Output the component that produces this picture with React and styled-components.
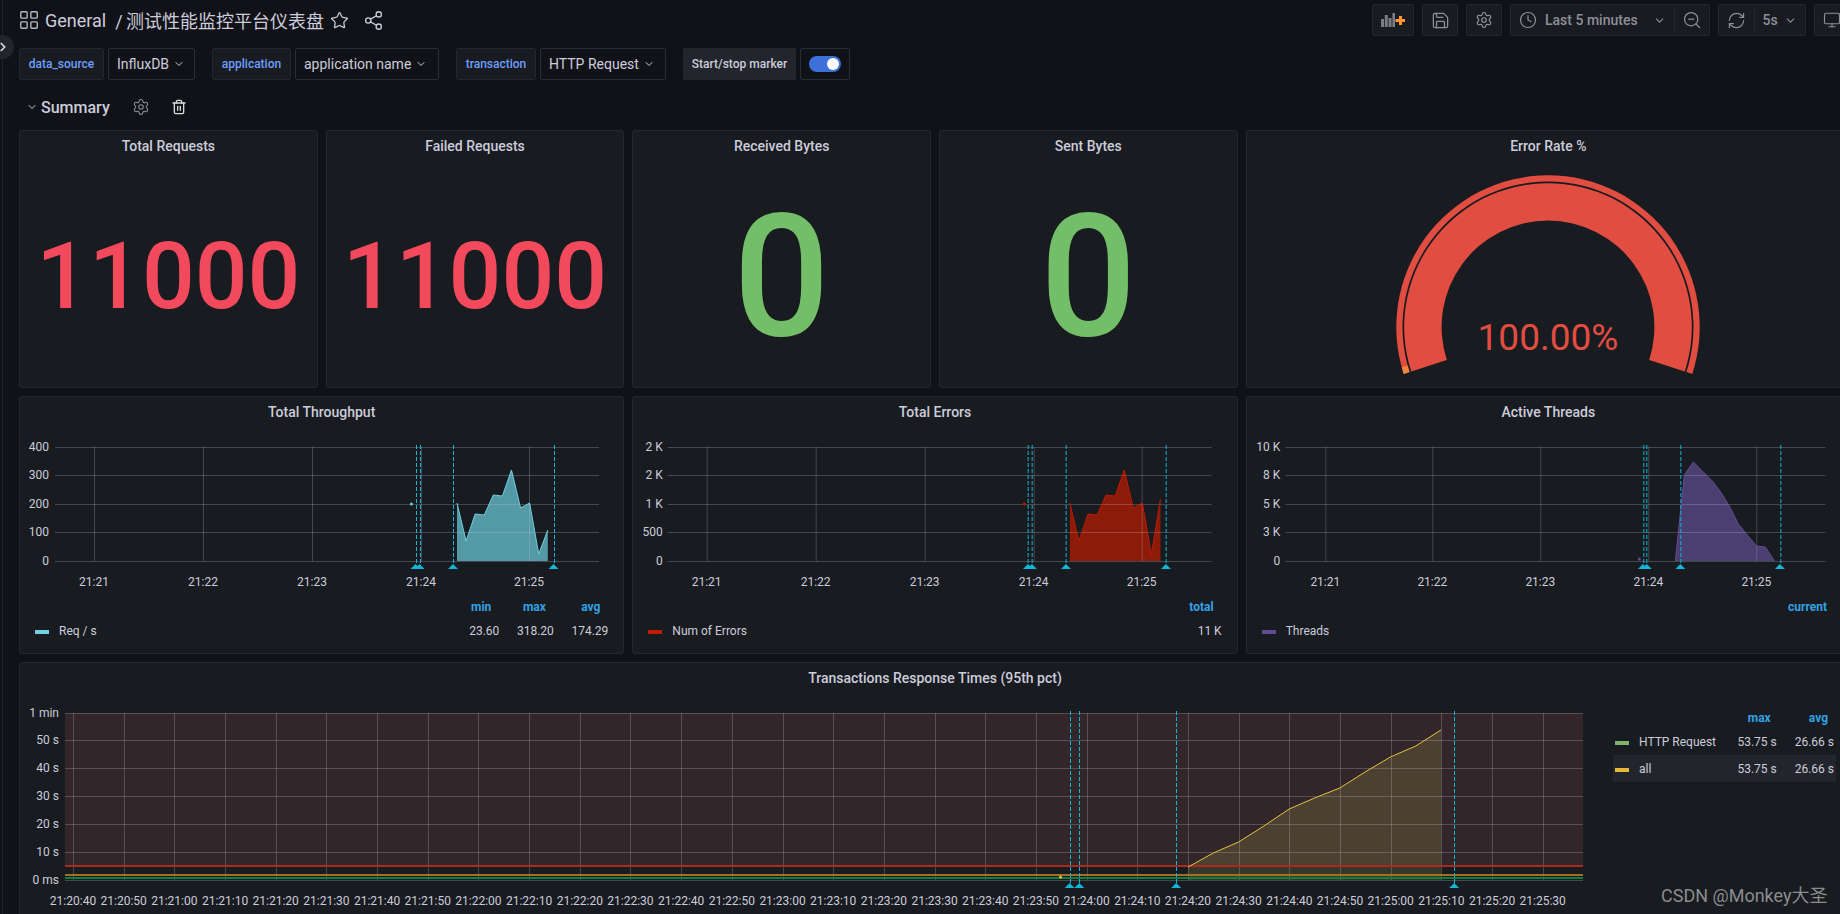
import styled, { createGlobalStyle } from "styled-components";
import {
  ChevronDown,
  ChevronRight,
  Clock,
  LayoutGrid,
  Monitor,
  RefreshCw,
  Save,
  Settings,
  Share2,
  Star,
  Trash2,
  ZoomOut,
} from "lucide-react";

const GlobalStyle = createGlobalStyle`
  html, body {
    margin: 0;
    background: #111217;
    overflow: hidden;
  }
  * {
    box-sizing: border-box;
  }
`;

const CYAN = "#12b5d8";

// coordinates below are page pixels, the svg viewBox maps them into each panel
const throughputY = [503, 541, 514, 515, 495, 496, 470, 508, 503, 554, 530];
const errorsY = [503, 541, 514, 515, 495, 496, 470, 508, 503, 554, 499];

const throughput = {
  view: [19, 428, 605, 168],
  left: 55,
  right: 599,
  labelRight: 49,
  yTicks: [
    [447, "400"],
    [475, "300"],
    [504, "200"],
    [532, "100"],
    [561, "0"],
  ],
  xTicks: [
    [94, "21:21"],
    [203, "21:22"],
    [312, "21:23"],
    [421, "21:24"],
    [529, "21:25"],
  ],
  marks: [415.5, 419.6, 453, 553.5],
  color: "#6ed0e0",
  points: throughputY.map((y, i) => [457 + i * 9.08, y]),
  dot: [411.4, 504],
};

const errors = {
  view: [632.33, 428, 605, 168],
  left: 668,
  right: 1212,
  labelRight: 663,
  yTicks: [
    [447, "2 K"],
    [475, "2 K"],
    [504, "1 K"],
    [532, "500"],
    [561, "0"],
  ],
  xTicks: [
    [707, "21:21"],
    [816, "21:22"],
    [925, "21:23"],
    [1034, "21:24"],
    [1142, "21:25"],
  ],
  marks: [1028.3, 1032.3, 1066.3, 1166.3],
  color: "#bf1b00",
  points: errorsY.map((y, i) => [1070.2 + i * 9.06, y]),
  dot: [1024.5, 504],
};

const threads = {
  view: [1245.67, 428, 605, 168],
  left: 1285,
  right: 1825,
  labelRight: 1280,
  yTicks: [
    [447, "10 K"],
    [475, "8 K"],
    [504, "5 K"],
    [532, "3 K"],
    [561, "0"],
  ],
  xTicks: [
    [1325, "21:21"],
    [1432, "21:22"],
    [1540, "21:23"],
    [1648, "21:24"],
    [1756, "21:25"],
  ],
  marks: [1642.6, 1646.4, 1680, 1779.6],
  color: "#614d93",
  points: [
    [1675, 561],
    [1684, 475],
    [1693, 462],
    [1702, 471],
    [1712, 481],
    [1721, 493],
    [1729, 506],
    [1738, 524],
    [1747, 535],
    [1756, 546],
    [1765, 547],
    [1774, 561],
  ],
  dot: [1639, 559],
};

const responseTimes = {
  view: [19, 694, 1594, 216],
  left: 65,
  right: 1583,
  labelRight: 59,
  labelY: 901,
  yTicks: [
    [713, "1 min"],
    [740, "50 s"],
    [768, "40 s"],
    [796, "30 s"],
    [824, "20 s"],
    [852, "10 s"],
    [880, "0 ms"],
  ],
  xTicks: Array.from({ length: 30 }, (_, i) => {
    const total = 21 * 3600 + 20 * 60 + 40 + i * 10;
    const h = Math.floor(total / 3600);
    const m = String(Math.floor((total % 3600) / 60)).padStart(2, "0");
    const s = String(total % 60).padStart(2, "0");
    return [73 + i * 50.68, `${h}:${m}:${s}`];
  }),
  marks: [1069.6, 1079.3, 1176.2, 1454.2],
  markTop: 711,
  color: "#e5c23e",
  fillColor: "#b5b04a",
  fillOpacity: 0.2,
  points: [867, 853, 842, 826, 809, 798, 788, 772, 757, 746, 730].map((y, i) => [
    1188 + i * 25.3,
    y,
  ]),
  dot: [1060.5, 877],
};

const crisp = (v) => Math.round(v) + 0.5;

function Chart({ config, children, band }) {
  const { view, left, right, labelRight, yTicks, xTicks, marks, color, points, dot } = config;
  const top = yTicks[0][0];
  const bottom = yTicks[yTicks.length - 1][0];
  const markTop = config.markTop ?? top - 2;
  const labelY = config.labelY ?? 582;
  const path = points.map(([x, y]) => `${x},${y}`).join(" ");
  const first = points[0][0];
  const last = points[points.length - 1][0];
  return (
    <ChartSvg viewBox={view.join(" ")} width={view[2]} height={view[3]}>
      {band}
      <polygon
        points={`${first},${bottom} ${path} ${last},${bottom}`}
        fill={config.fillColor ?? color}
        fillOpacity={config.fillOpacity ?? 0.7}
      />
      {yTicks.map(([y, label]) => (
        <g key={`${y}${label}`}>
          <line x1={left} x2={right} y1={crisp(y)} y2={crisp(y)} stroke="rgba(204,204,220,0.25)" />
          <AxisText x={labelRight} y={y} textAnchor="end" dominantBaseline="central">
            {label}
          </AxisText>
        </g>
      ))}
      {xTicks.map(([x, label]) => (
        <g key={label}>
          <line x1={crisp(x)} x2={crisp(x)} y1={top} y2={bottom} stroke="rgba(204,204,220,0.25)" />
          <AxisText x={x} y={labelY} textAnchor="middle" dominantBaseline="central">
            {label}
          </AxisText>
        </g>
      ))}
      {children}
      <polyline points={path} fill="none" stroke={color} strokeWidth="1" />
      <circle cx={dot[0]} cy={dot[1]} r="1.5" fill={color} />
      {marks.map((x) => (
        <g key={x}>
          <line
            x1={crisp(x)}
            x2={crisp(x)}
            y1={markTop}
            y2={bottom + 4}
            stroke={CYAN}
            strokeDasharray="4 2"
          />
          <polygon
            points={`${x},${bottom + 3} ${x - 5},${bottom + 8} ${x + 5},${bottom + 8}`}
            fill={CYAN}
          />
        </g>
      ))}
    </ChartSvg>
  );
}

// gauge angles go clockwise on screen, 162 is the lower left end, 378 the lower right
function arcPath(r0, r1, a0, a1) {
  const cx = 301;
  const cy = 165;
  const pt = (r, a) => {
    const rad = (a * Math.PI) / 180;
    return `${(cx + r * Math.cos(rad)).toFixed(2)} ${(cy + r * Math.sin(rad)).toFixed(2)}`;
  };
  const large = a1 - a0 > 180 ? 1 : 0;
  return `M${pt(r1, a0)} A${r1} ${r1} 0 ${large} 1 ${pt(r1, a1)} L${pt(r0, a1)} A${r0} ${r0} 0 ${large} 0 ${pt(r0, a0)} Z`;
}

function Gauge() {
  return (
    <GaugeSvg viewBox="0 0 604 226" width="604" height="226">
      <path d={arcPath(145.5, 151.7, 162, 378)} fill="#e24d42" />
      <path d={arcPath(145.5, 151.7, 162, 164.6)} fill="#ef843c" />
      <path d={arcPath(106.4, 143.8, 162, 378)} fill="#e24d42" />
      <GaugeValue x="301" y="175" textAnchor="middle" dominantBaseline="central">
        100.00%
      </GaugeValue>
    </GaugeSvg>
  );
}

function AddPanelIcon() {
  return (
    <svg width="24" height="14" viewBox="0 0 24 14">
      <g fill="#7b7c85">
        <rect x="0" y="6" width="3" height="8" />
        <rect x="3.8" y="2" width="3" height="12" />
        <rect x="7.6" y="5" width="3" height="9" />
        <rect x="11.4" y="0" width="2.6" height="14" />
      </g>
      <path d="M18 3h3v3h3v3h-3v3h-3V9h-3.500V6H18z" fill="#ff9830" />
    </svg>
  );
}

function Legend({ columns, colWidth, rows, side }) {
  return (
    <LegendBox $side={side}>
      <LegendHead $n={columns.length} $w={colWidth}>
        <span />
        {columns.map((c) => (
          <LegendCol key={c}>{c}</LegendCol>
        ))}
      </LegendHead>
      {rows.map((row) => (
        <LegendRow key={row.name} $n={columns.length} $w={colWidth} $active={row.active} $side={side}>
          <LegendName>
            <Swatch $color={row.color} />
            {row.name}
          </LegendName>
          {row.values.map((v, i) => (
            <LegendValue key={i}>{v}</LegendValue>
          ))}
        </LegendRow>
      ))}
    </LegendBox>
  );
}

function VarPicker({ label, value, labelWidth, valueWidth }) {
  return (
    <VarGroup>
      <VarLabel $w={labelWidth}>{label}</VarLabel>
      <VarValue $w={valueWidth}>
        {value}
        <ChevronDown size={12} strokeWidth={2} />
      </VarValue>
    </VarGroup>
  );
}

export default function App() {
  return (
    <Page>
      <GlobalStyle />
      <MenuToggle>
        <ChevronRight size={14} strokeWidth={3} />
      </MenuToggle>
      <Content>
        <Header>
          <TitleGroup>
            <LayoutGrid size={22} strokeWidth={1.5} color="#b7b8c4" />
            <Crumb>General</Crumb>
            <DashName>/ 测试性能监控平台仪表盘</DashName>
            <Star size={19} strokeWidth={1.6} color="#ccccdc" />
            <Share2 size={21} strokeWidth={1.5} color="#ccccdc" />
          </TitleGroup>
          <Toolbar>
            <ToolButton $w={42}>
              <AddPanelIcon />
            </ToolButton>
            <ToolButton>
              <Save size={19} strokeWidth={1.6} />
            </ToolButton>
            <ToolButton>
              <Settings size={18} strokeWidth={1.6} />
            </ToolButton>
            <ToolGroup>
              <ToolSegment $w={163} $pad="0 8px" $start>
                <Clock size={18} strokeWidth={1.6} />
                <ToolText $gap={8}>Last 5 minutes</ToolText>
                <ChevronDown size={13} strokeWidth={2} />
              </ToolSegment>
              <ToolSegment $w={35}>
                <ZoomOut size={20} strokeWidth={1.5} />
              </ToolSegment>
            </ToolGroup>
            <ToolGroup>
              <ToolSegment $w={34.5}>
                <RefreshCw size={19} strokeWidth={1.5} />
              </ToolSegment>
              <ToolSegment $w={51.5} $pad="0 8px" $start>
                <ToolText>5s</ToolText>
                <ChevronDown size={13} strokeWidth={2} />
              </ToolSegment>
            </ToolGroup>
            <ToolButton>
              <Monitor size={18} strokeWidth={1.6} />
            </ToolButton>
          </Toolbar>
        </Header>

        <VarRow>
          <VarPicker label="data_source" value="InfluxDB" labelWidth={85} valueWidth={87} />
          <VarPicker label="application" value="application name" labelWidth={79} valueWidth={144} />
          <VarPicker label="transaction" value="HTTP Request" labelWidth={80} valueWidth={126} />
          <VarGroup>
            <SwitchLabel>Start/stop marker</SwitchLabel>
            <SwitchBox>
              <SwitchTrack>
                <SwitchThumb />
              </SwitchTrack>
            </SwitchBox>
          </VarGroup>
        </VarRow>

        <RowHeader>
          <ChevronDown size={12} strokeWidth={2} color="#ccccdc" />
          <RowTitle>Summary</RowTitle>
          <Settings size={18} strokeWidth={1.4} color="#8e8e9a" />
          <Trash2 size={16} strokeWidth={2} color="#d8d9da" />
        </RowHeader>

        <PanelGrid>
          <Panel $span={4}>
            <PanelTitle>Total Requests</PanelTitle>
            <StatBody>
              <StatValue $color="#f2495c" $size={93}>
                11000
              </StatValue>
            </StatBody>
          </Panel>
          <Panel $span={4}>
            <PanelTitle>Failed Requests</PanelTitle>
            <StatBody>
              <StatValue $color="#f2495c" $size={93}>
                11000
              </StatValue>
            </StatBody>
          </Panel>
          <Panel $span={4}>
            <PanelTitle>Received Bytes</PanelTitle>
            <StatBody>
              <StatValue $color="#73bf69" $size={170}>
                0
              </StatValue>
            </StatBody>
          </Panel>
          <Panel $span={4}>
            <PanelTitle>Sent Bytes</PanelTitle>
            <StatBody>
              <StatValue $color="#73bf69" $size={170}>
                0
              </StatValue>
            </StatBody>
          </Panel>
          <Panel $span={8}>
            <PanelTitle>Error Rate %</PanelTitle>
            <Gauge />
          </Panel>

          <Panel $span={8}>
            <PanelTitle>Total Throughput</PanelTitle>
            <Chart config={throughput} />
            <Legend
              columns={["min", "max", "avg"]}
              colWidth={54.5}
              rows={[
                { name: "Req / s", color: "#6ed0e0", values: ["23.60", "318.20", "174.29"] },
              ]}
            />
          </Panel>
          <Panel $span={8}>
            <PanelTitle>Total Errors</PanelTitle>
            <Chart config={errors} />
            <Legend
              columns={["total"]}
              colWidth={54.5}
              rows={[{ name: "Num of Errors", color: "#bf1b00", values: ["11 K"] }]}
            />
          </Panel>
          <Panel $span={8}>
            <PanelTitle>Active Threads</PanelTitle>
            <Chart config={threads} />
            <Legend
              columns={["current"]}
              colWidth={54.5}
              rows={[{ name: "Threads", color: "#614d93", values: [""] }]}
            />
          </Panel>

          <Panel $span={24}>
            <PanelTitle>Transactions Response Times (95th pct)</PanelTitle>
            <WidePanelBody>
              <Chart
                config={responseTimes}
                band={<rect x="65" y="713" width="1518" height="153" fill="#33262b" />}
              >
                <line x1="65" x2="1583" y1="866" y2="866" stroke="#ab2a1f" strokeWidth="2" />
                <line x1="65" x2="1583" y1="875" y2="875" stroke="#a86d1f" strokeWidth="2" />
                <line x1="65" x2="1583" y1="878" y2="878" stroke="#0f7f3d" strokeWidth="2" />
              </Chart>
              <Legend
                side
                columns={["max", "avg"]}
                colWidth={57.3}
                rows={[
                  { name: "HTTP Request", color: "#7eb26d", values: ["53.75 s", "26.66 s"] },
                  { name: "all", color: "#eab839", values: ["53.75 s", "26.66 s"], active: true },
                ]}
              />
            </WidePanelBody>
          </Panel>
        </PanelGrid>
      </Content>
      <Watermark>CSDN @Monkey大圣</Watermark>
    </Page>
  );
}

const Page = styled.div`
  position: relative;
  width: 1840px;
  height: 914px;
  overflow: hidden;
  background: #111217;
  color: #ccccdc;
  font-family: Roboto, "Noto Sans CJK SC", sans-serif;
  font-size: 14px;
`;

const Content = styled.div`
  width: 1848px;
  height: 914px;
  margin-left: 2px;
  padding-left: 16px;
  border-left: 1px solid #202226;
`;

const MenuToggle = styled.div`
  position: absolute;
  left: -10px;
  top: 35px;
  width: 24px;
  height: 24px;
  border-radius: 50%;
  background: #22252b;
  color: #d8d9da;
  display: flex;
  align-items: center;
  justify-content: center;
  padding-left: 1px;
`;

const Header = styled.header`
  height: 40px;
  display: flex;
  align-items: center;
  justify-content: space-between;
`;

const TitleGroup = styled.div`
  display: flex;
  align-items: center;
  margin-left: -1px;

  svg:nth-of-type(2) {
    margin-left: 6px;
  }
  svg:nth-of-type(3) {
    margin-left: 14px;
  }
`;

const Crumb = styled.span`
  font-size: 18px;
  margin-left: 5px;
`;

const DashName = styled.span`
  font-size: 18px;
  margin-left: 9px;
  word-spacing: -1px;
`;

const Toolbar = styled.div`
  display: flex;
  gap: 8px;
`;

const ToolButton = styled.div`
  width: ${(p) => p.$w ?? 36}px;
  height: 32px;
  display: flex;
  align-items: center;
  justify-content: center;
  background: #181b1f;
  border: 1px solid #24272c;
  border-radius: 2px;
  color: #8e8f9a;
`;

const ToolGroup = styled.div`
  display: flex;
  height: 32px;
  background: #181b1f;
  border: 1px solid #24272c;
  border-radius: 2px;
  color: #8e8f9a;
`;

const ToolSegment = styled.div`
  display: flex;
  align-items: center;
  justify-content: ${(p) => (p.$start ? "flex-start" : "center")};
  width: ${(p) => p.$w}px;
  padding: ${(p) => p.$pad ?? 0};

  & + & {
    border-left: 1px solid #24272c;
  }
`;

const ToolText = styled.span`
  font-weight: 500;
  font-size: 14px;
  margin-left: ${(p) => p.$gap ?? 0}px;
  margin-right: auto;
`;

const VarRow = styled.div`
  display: flex;
  gap: 17px;
  margin-top: 8px;
`;

const VarGroup = styled.div`
  display: flex;
  gap: 4px;
`;

const VarLabel = styled.div`
  width: ${(p) => p.$w}px;
  height: 32px;
  display: flex;
  align-items: center;
  justify-content: center;
  background: #181b1f;
  border: 1px solid #24272c;
  border-radius: 2px;
  color: #6e9fff;
  font-size: 12px;
  font-weight: 500;
`;

const VarValue = styled.div`
  width: ${(p) => p.$w}px;
  height: 32px;
  padding-left: 8px;
  display: flex;
  align-items: center;
  gap: 4px;
  background: #111217;
  border: 1px solid #2c2e33;
  border-radius: 2px;
  color: #ccccdc;
  font-size: 14px;
  white-space: nowrap;
`;

const SwitchLabel = styled.div`
  width: 113px;
  height: 32px;
  display: flex;
  align-items: center;
  justify-content: center;
  background: #22252b;
  border-radius: 2px;
  font-size: 12px;
  font-weight: 500;
`;

const SwitchBox = styled.div`
  width: 50px;
  height: 32px;
  display: flex;
  align-items: center;
  justify-content: center;
  border: 1px solid #2c2e33;
  border-radius: 2px;
`;

const SwitchTrack = styled.div`
  width: 32px;
  height: 16px;
  border-radius: 8px;
  background: #3d71d9;
  display: flex;
  align-items: center;
  justify-content: flex-end;
  padding-right: 2px;
`;

const SwitchThumb = styled.div`
  width: 12px;
  height: 12px;
  border-radius: 50%;
  background: #fff;
`;

const RowHeader = styled.div`
  height: 50px;
  display: flex;
  align-items: center;
  padding: 4px 0 0 7px;

  svg:nth-of-type(2) {
    margin-left: 22px;
  }
  svg:nth-of-type(3) {
    margin-left: 21px;
  }
`;

const RowTitle = styled.span`
  font-size: 16px;
  font-weight: 500;
  margin-left: 3px;
`;

const PanelGrid = styled.div`
  width: 1832px;
  display: grid;
  grid-template-columns: repeat(24, 1fr);
  grid-template-rows: 258px 258px 270px;
  gap: 8px;
`;

const Panel = styled.section`
  grid-column: span ${(p) => p.$span};
  min-width: 0;
  background: #181b1f;
  border: 1px solid #24272c;
  border-radius: 3px;
  display: flex;
  flex-direction: column;
  overflow: hidden;
`;

const PanelTitle = styled.h2`
  margin: 0;
  height: 31px;
  flex: none;
  line-height: 30px;
  text-align: center;
  font-size: 14px;
  font-weight: 500;
  color: #ccccdc;
`;

const StatBody = styled.div`
  flex: 1;
  display: flex;
  align-items: center;
  justify-content: center;
  padding-top: 4px;
`;

const StatValue = styled.div`
  color: ${(p) => p.$color};
  font-size: ${(p) => p.$size}px;
  line-height: 1;
  font-weight: 500;
`;

const ChartSvg = styled.svg`
  display: block;
  flex: none;
  margin-left: -1px;
`;

const GaugeSvg = styled.svg`
  display: block;
  flex: none;
`;

const AxisText = styled.text`
  fill: #ccccdc;
  font-size: 12px;
`;

const GaugeValue = styled.text`
  fill: #e24d42;
  font-size: 37px;
`;

const WidePanelBody = styled.div`
  display: flex;
`;

const LegendBox = styled.div`
  font-size: 12px;
  ${(p) =>
    p.$side
      ? `
    width: 223px;
    flex: none;
    padding-top: 13px;
  `
      : `
    padding: 0 15px;
  `}
`;

const LegendHead = styled.div`
  height: 21px;
  display: grid;
  grid-template-columns: 1fr repeat(${(p) => p.$n}, ${(p) => p.$w}px);
  align-items: center;
`;

const LegendCol = styled.span`
  text-align: right;
  padding-right: 8px;
  color: #33a2e5;
  font-weight: 700;
`;

const LegendRow = styled.div`
  height: 27px;
  display: grid;
  grid-template-columns: 1fr repeat(${(p) => p.$n}, ${(p) => p.$w}px);
  align-items: center;
  background: ${(p) => (p.$active ? "#22252b" : "transparent")};
  ${(p) => (p.$side ? "padding: 0 2px;" : "")}
`;

const LegendName = styled.span`
  display: flex;
  align-items: center;
`;

const LegendValue = styled.span`
  text-align: right;
`;

const Swatch = styled.i`
  width: 14px;
  height: 4px;
  margin-right: 10px;
  margin-top: 2px;
  background: ${(p) => p.$color};
`;

const Watermark = styled.div`
  position: absolute;
  left: 1661px;
  top: 881px;
  font-size: 18px;
  color: #8b8c90;
  white-space: nowrap;
`;
